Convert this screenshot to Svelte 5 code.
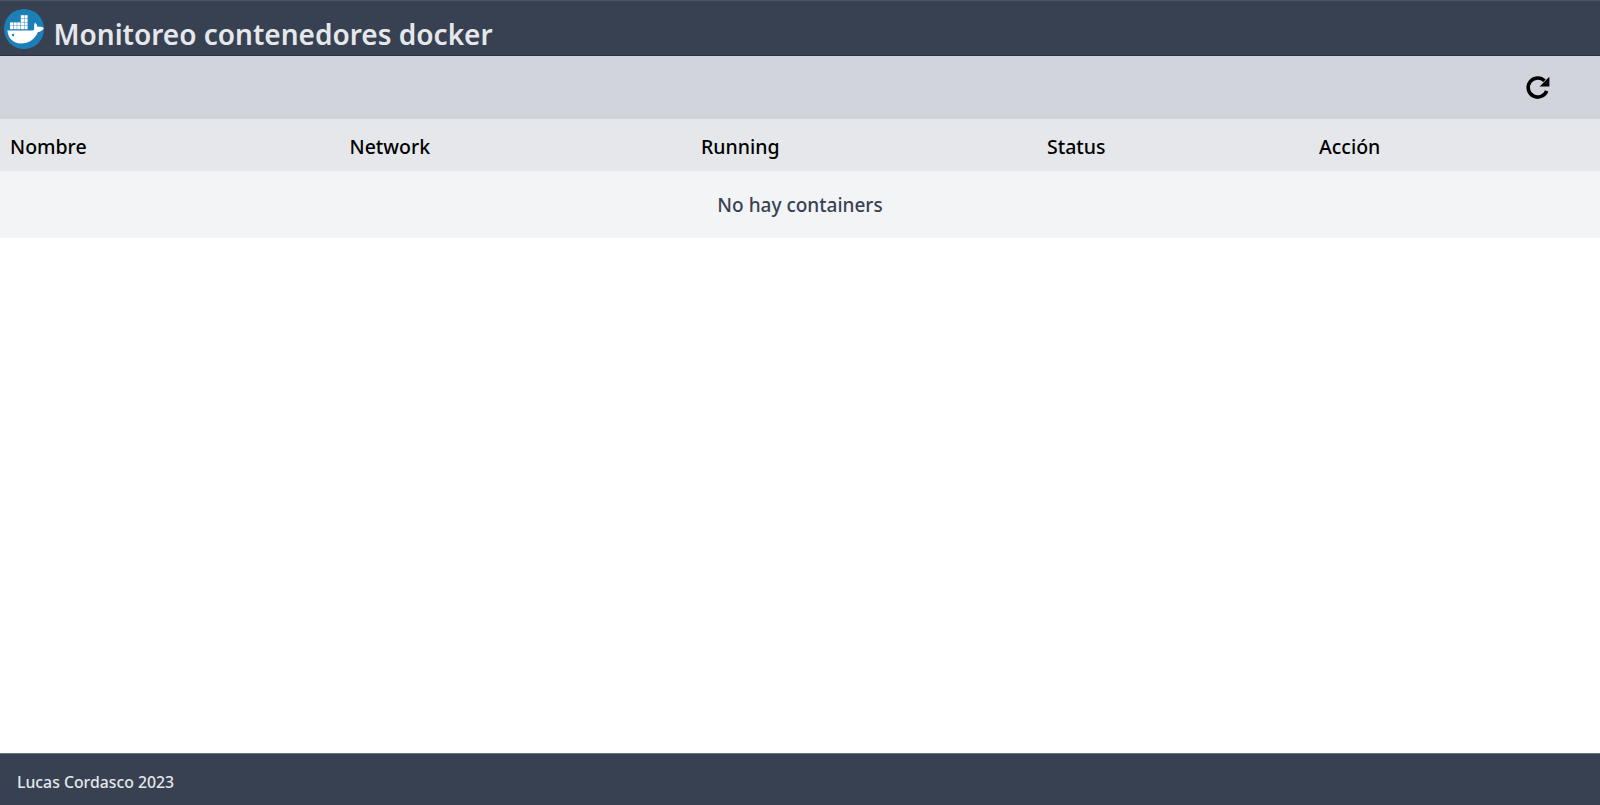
<script>
  const columns = ['Nombre', 'Network', 'Running', 'Status', 'Acción'];
  const crates = [
    [6, 17], [9.600, 17], [13.200, 17], [16.800, 17], [20.400, 17],
    [6, 13.400], [9.600, 13.400], [13.200, 13.400], [16.800, 13.400], [20.400, 13.400],
    [16.800, 9.800], [20.400, 9.800],
    [16.800, 6.200], [20.400, 6.200]
  ];
</script>

<div class="page">
  <header class="topbar">
    <svg class="logo" viewBox="0 0 40 40" aria-hidden="true">
      <circle cx="20" cy="20" r="20" fill="#1d7fb8" />
      <path fill="#fff" d="M3.400 21.500H27c2 0 3-.5 3.300-1.500-.5-2-.3-4.500.7-6.500 1.500 1.500 2.500 3 2.500 4.500 2-.5 4.500-.5 6.500 1-1.500 2.500-3.500 3.800-6 4-3 7-9 11.500-17 11.500-8 0-13-5.500-13.600-13z" />
      <circle cx="9" cy="26" r="1.200" fill="#1d7fb8" />
      <g fill="#fff">
        {#each crates as [x, y]}
          <rect {x} {y} width="3.200" height="3.200" />
        {/each}
      </g>
    </svg>
    <h1>Monitoreo contenedores docker</h1>
  </header>

  <div class="toolbar">
    <button class="refresh" aria-label="Refrescar">
      <svg viewBox="0 0 24 24" aria-hidden="true">
        <path fill="none" stroke="#000" stroke-width="3.300" d="M20 15.500A8.800 8.800 0 1 1 18 6.300" />
        <path fill="#000" d="M22.500 2.500v9h-9z" />
      </svg>
    </button>
  </div>

  <main class="content">
    <table>
      <colgroup>
        <col class="c1" /><col class="c2" /><col class="c3" /><col class="c4" /><col class="c5" />
      </colgroup>
      <thead>
        <tr>
          {#each columns as column}
            <th>{column}</th>
          {/each}
        </tr>
      </thead>
      <tbody>
        <tr>
          <td colspan="5">No hay containers</td>
        </tr>
      </tbody>
    </table>
  </main>

  <footer class="footer">Lucas Cordasco 2023</footer>
</div>

<style>
  :global(body) {
    margin: 0;
    font-family: "Noto Sans", "Open Sans", sans-serif;
  }

  .page {
    display: flex;
    flex-direction: column;
    height: 805px;
    overflow: hidden;
    background: #fff;
  }

  .topbar {
    display: flex;
    align-items: center;
    gap: 10px;
    height: 56px;
    box-sizing: border-box;
    padding: 0 0 0 3.500px;
    background: #374151;
    border-top: 1px solid #4b5563;
    border-bottom: 1px solid #2b3340;
  }

  .logo {
    width: 40px;
    height: 40px;
    flex: none;
    margin-top: 2px;
  }

  h1 {
    margin: 11px 0 0;
    font-size: 28px;
    font-weight: 600;
    line-height: 36px;
    color: #e5e7eb;
  }

  .toolbar {
    display: flex;
    justify-content: flex-end;
    align-items: center;
    height: 63px;
    padding-right: 49px;
    background: #d1d5db;
  }

  .refresh {
    display: flex;
    padding: 0 0 2px;
    border: 0;
    background: none;
  }

  .refresh svg {
    width: 26px;
    height: 26px;
    display: block;
  }

  .content {
    flex: 1;
  }

  table {
    width: 100%;
    border-collapse: collapse;
    table-layout: fixed;
  }

  .c1 { width: 339.500px; }
  .c2 { width: 351.500px; }
  .c3 { width: 346px; }
  .c4 { width: 272px; }

  thead tr {
    background: #e5e7eb;
  }

  th {
    height: 52px;
    padding: 3px 0 0 10px;
    box-sizing: border-box;
    text-align: left;
    font-size: 19.500px;
    font-weight: 500;
    color: #000;
  }

  tbody tr {
    background: #f3f4f6;
  }

  td {
    height: 67px;
    padding: 1px 0 0;
    box-sizing: border-box;
    text-align: center;
    font-size: 19px;
    font-weight: 500;
    color: #374151;
  }

  .footer {
    display: flex;
    align-items: center;
    height: 52px;
    box-sizing: border-box;
    padding: 5px 0 0 17px;
    background: #374151;
    border-top: 1px solid #6b7280;
    color: #e5e7eb;
    font-size: 15.800px;
    font-weight: 500;
  }
</style>
